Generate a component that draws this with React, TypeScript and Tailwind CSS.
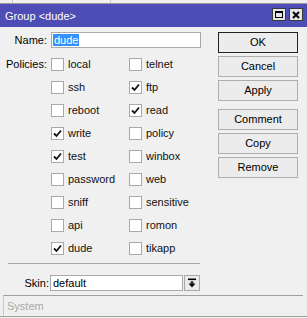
import React from "react";

type Policy = { name: string; on: boolean };

const left: Policy[] = [
  { name: "local", on: false },
  { name: "ssh", on: false },
  { name: "reboot", on: false },
  { name: "write", on: true },
  { name: "test", on: true },
  { name: "password", on: false },
  { name: "sniff", on: false },
  { name: "api", on: false },
  { name: "dude", on: true },
];

const right: Policy[] = [
  { name: "telnet", on: false },
  { name: "ftp", on: true },
  { name: "read", on: true },
  { name: "policy", on: false },
  { name: "winbox", on: false },
  { name: "web", on: false },
  { name: "sensitive", on: false },
  { name: "romon", on: false },
  { name: "tikapp", on: false },
];

function Check({ p }: { p: Policy }) {
  return (
    <div className="flex items-center gap-[4px]">
      <div className="w-[13px] h-[13px] border border-[#a9a9a9] bg-white flex items-center justify-center">
        {p.on && (
          <svg width="9" height="9" viewBox="0 0 9 9">
            <path d="M1 4.5 L3.5 7 L8 1.5" fill="none" stroke="#111" strokeWidth="1.8" />
          </svg>
        )}
      </div>
      <span className="text-[#111]">{p.name}</span>
    </div>
  );
}

function Btn({ label, main }: { label: string; main?: boolean }) {
  return (
    <div
      className={`h-[21px] flex items-center justify-center bg-[#ececec] border ${
        main ? "border-[#222]" : "border-[#adadad]"
      }`}
    >
      {label}
    </div>
  );
}

export default function App() {
  return (
    <div className="w-[307px] h-[318px] overflow-hidden bg-[#f0f0f0] text-[11px] text-black font-['Liberation_Sans',Arial,sans-serif] flex flex-col">
      {/* bit of window behind */}
      <div className="h-[4px] shrink-0 border-b border-[#9a9a9a] flex">
        <div className="ml-[12px] w-px bg-[#c8c8c8]" />
        <div className="ml-[97px] w-px bg-[#c8c8c8]" />
      </div>

      {/* title bar */}
      <div className="h-[23px] shrink-0 bg-[#4d4db5] flex items-start">
        <span className="pl-[5px] pt-[4px] text-white">Group &lt;dude&gt;</span>
        <div className="ml-auto mr-[4px] mt-[4px] flex gap-[3px]">
          <div className="w-[14px] h-[13px] bg-[#e6e6e6] border border-[#3a3a3a] flex items-center justify-center">
            <div className="w-[8px] h-[7px] border border-black border-t-2" />
          </div>
          <div className="w-[14px] h-[13px] bg-[#e6e6e6] border border-[#3a3a3a] flex items-center justify-center">
            <svg width="8" height="8" viewBox="0 0 8 8">
              <path d="M1 1 L7 7 M7 1 L1 7" stroke="#000" strokeWidth="2" />
            </svg>
          </div>
        </div>
      </div>

      {/* body */}
      <div className="flex pt-[5px]">
        <div className="w-[218px] flex flex-col">
          <div className="flex items-center h-[16px]">
            <span className="w-[47px] text-right">Name:</span>
            <div className="ml-[4px] w-[150px] h-[16px] bg-white border border-[#a9a9a9] flex items-center pl-[1px]">
              <span className="bg-[#3390ff] text-white px-[1px] leading-[12px]">dude</span>
            </div>
          </div>

          <div className="mt-[5px] flex">
            <div className="w-[47px] text-right h-[23px] flex items-center justify-end">Policies:</div>
            <div className="ml-[4px] w-[78px] flex flex-col">
              {left.map((p) => (
                <div key={p.name} className="h-[23px] flex items-center">
                  <Check p={p} />
                </div>
              ))}
            </div>
            <div className="flex flex-col">
              {right.map((p) => (
                <div key={p.name} className="h-[23px] flex items-center">
                  <Check p={p} />
                </div>
              ))}
            </div>
          </div>
        </div>

        <div className="w-[80px] flex flex-col gap-[3px]">
          <Btn label="OK" main />
          <Btn label="Cancel" />
          <Btn label="Apply" />
          <div className="h-[2px]" />
          <Btn label="Comment" />
          <Btn label="Copy" />
          <Btn label="Remove" />
        </div>
      </div>

      <div className="mt-[3px] ml-[8px] w-[192px] h-px bg-[#a8a8a8]" />

      <div className="mt-[11px] flex items-center h-[16px]">
        <span className="w-[49px] text-right">Skin:</span>
        <div className="ml-[1px] w-[133px] h-[16px] bg-white border border-[#a9a9a9] flex items-center pl-[2px]">
          default
        </div>
        <div className="ml-[1px] w-[16px] h-[16px] border border-[#a9a9a9] bg-[#ececec] flex items-center justify-center">
          <svg width="10" height="10" viewBox="0 0 10 10">
            <rect x="1" y="0.5" width="8" height="1.6" fill="#000" />
            <rect x="3.7" y="3.5" width="2.6" height="2" fill="#000" />
            <path d="M1.5 5.5 H8.5 L5 9.5 Z" fill="#000" />
          </svg>
        </div>
      </div>

      <div className="mt-[4px] ml-[3px] w-[300px] h-[21px] border-t border-l border-[#a0a0a0] border-l-[#c8c8c8] flex items-center pl-[3px] text-[#a8a8a8]">
        System
      </div>
      <div className="h-px bg-[#a0a0a0]" />
    </div>
  );
}
